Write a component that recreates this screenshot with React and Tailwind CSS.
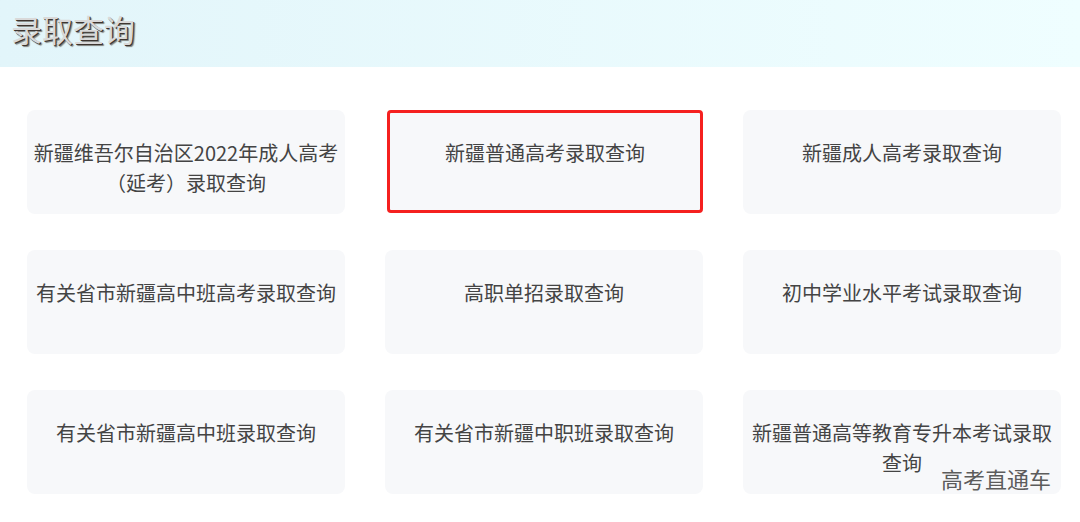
import React from "react";

const ITEMS = [
  { lines: ["新疆维吾尔自治区2022年成人高考", "（延考）录取查询"] },
  { lines: ["新疆普通高考录取查询"], active: true },
  { lines: ["新疆成人高考录取查询"] },
  { lines: ["有关省市新疆高中班高考录取查询"] },
  { lines: ["高职单招录取查询"] },
  { lines: ["初中学业水平考试录取查询"] },
  { lines: ["有关省市新疆高中班录取查询"] },
  { lines: ["有关省市新疆中职班录取查询"] },
  { lines: ["新疆普通高等教育专升本考试录取", "查询"] },
];

function QueryCard({ item }) {
  return (
    <div
      className={
        item.active
          ? "flex h-[103px] justify-center rounded-[4px] border-[3px] border-[#f5201f] bg-[#f7f8fa] px-2 pt-[25px] text-center"
          : "flex h-[104px] justify-center rounded-[8px] bg-[#f7f8fa] px-2 pt-[28px] text-center"
      }
    >
      <p className="text-[20px] leading-[30px] text-[#444]">
        {item.lines.map((l, i) => (
          <span key={i} className="block whitespace-nowrap">
            {l}
          </span>
        ))}
      </p>
    </div>
  );
}

export default function App() {
  return (
    <div
      className="relative h-[522px] w-[1080px] overflow-hidden bg-white"
      style={{ fontFamily: '"Noto Sans CJK SC", "Noto Sans", sans-serif' }}
    >
      <header className="flex h-[67px] items-center bg-gradient-to-r from-[#e2f5fa] to-[#effeff] px-[11px]">
        <h1 className="mt-[-10px] text-[31px] leading-none text-[#d9d9d9] [text-shadow:1px_1px_0_#3d3530,2px_2px_1px_rgba(60,50,40,0.6)]">
          录取查询
        </h1>
      </header>

      <main className="grid grid-cols-[318px_318px_318px] gap-x-[40px] gap-y-[36px] pl-[27px] pt-[43px]">
        {ITEMS.map((item, i) => (
          <div key={i} className={item.active ? "pl-[2px]" : ""}>
            <QueryCard item={item} />
          </div>
        ))}
      </main>

      <div className="absolute left-[941px] top-[467px] text-[22px] leading-none text-[#5c5c5c] [text-shadow:0_0_1px_#fff]">
        高考直通车
      </div>
    </div>
  );
}
